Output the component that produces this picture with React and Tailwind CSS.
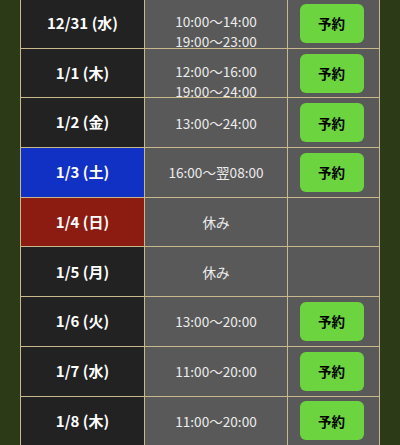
const rows = [
  { date: "12/31 (水)", times: ["10:00〜14:00", "19:00〜23:00"], open: true },
  { date: "1/1 (木)", times: ["12:00〜16:00", "19:00〜24:00"], open: true },
  { date: "1/2 (金)", times: ["13:00〜24:00"], open: true },
  { date: "1/3 (土)", times: ["16:00〜翌08:00"], open: true, tone: "sat" },
  { date: "1/4 (日)", times: ["休み"], open: false, tone: "sun" },
  { date: "1/5 (月)", times: ["休み"], open: false },
  { date: "1/6 (火)", times: ["13:00〜20:00"], open: true },
  { date: "1/7 (水)", times: ["11:00〜20:00"], open: true },
  { date: "1/8 (木)", times: ["11:00〜20:00"], open: true },
];

const dateTones = {
  sat: "bg-[#1130c4]",
  sun: "bg-[#8c1b12]",
  default: "bg-[#222222]",
};

function ReserveButton() {
  return (
    <button
      type="button"
      className="flex h-[39px] w-[64px] items-center justify-center rounded-[6px] bg-[#6bd43f] text-[13.5px] font-bold text-black"
    >
      予約
    </button>
  );
}

function ScheduleRow({ date, times, open, tone = "default" }) {
  const twoLine = times.length > 1;
  return (
    <div className="flex h-[49.7px] border-b border-[#c9b88b]">
      <div
        className={`flex w-[124px] items-center justify-center border-r border-[#c9b88b] text-[15px] font-bold text-white ${dateTones[tone]}`}
      >
        {date}
      </div>
      <div
        className={`flex w-[143px] flex-col items-center border-r border-[#c9b88b] bg-[#595959] text-[13.6px] leading-[20px] text-[#ececec] ${
          twoLine ? "justify-start pt-[12px]" : "justify-center"
        }`}
      >
        {times.map((t) => (
          <span key={t}>{t}</span>
        ))}
      </div>
      <div className="flex flex-1 items-center justify-center bg-[#595959] pr-[4px]">
        {open && <ReserveButton />}
      </div>
    </div>
  );
}

export default function App() {
  return (
    <div
      className="h-[445px] w-[400px] overflow-hidden bg-[#2d3a17]"
      style={{ fontFamily: '"Noto Sans CJK JP", "Noto Sans", sans-serif' }}
    >
      <div className="-mt-[1px] ml-[20px] w-[360px] border-x border-[#c9b88b]">
        {rows.map((row) => (
          <ScheduleRow key={row.date} {...row} />
        ))}
      </div>
    </div>
  );
}
